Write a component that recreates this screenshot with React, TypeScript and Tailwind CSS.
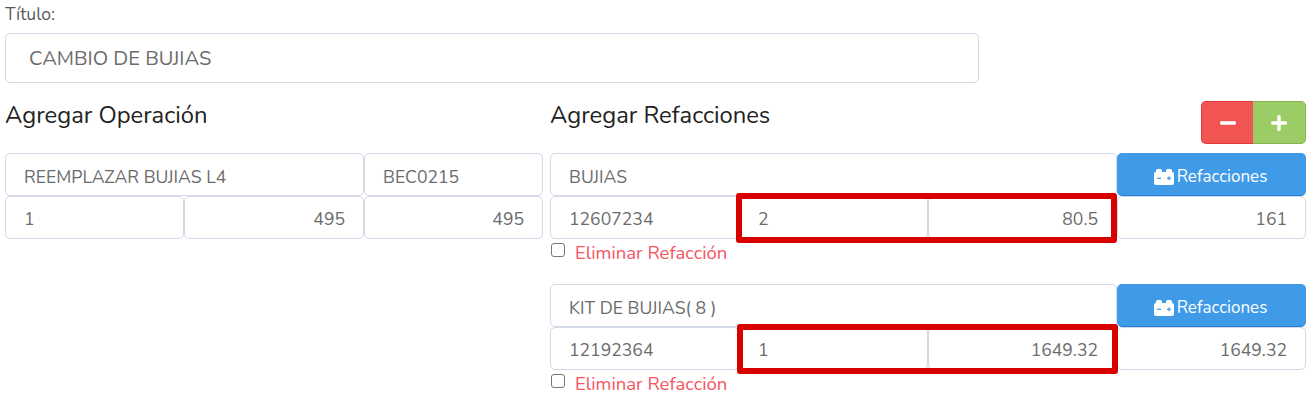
import { FaMinus, FaPlus } from "react-icons/fa";

const field =
  "block h-[43px] min-w-0 rounded-[5px] border border-[#d3d9e6] bg-white px-[18px] text-[17.6px] text-[#6b6b6b] outline-none";

function Field({ value, w, right, top }: { value: string; w: string; right?: boolean; top?: boolean }) {
  return <input readOnly value={value} className={`${field} ${w} ${top ? "pt-[4px]" : "pt-[2px]"} ${right ? "text-right" : ""}`} />;
}

function BatteryIcon() {
  return (
    <svg viewBox="0 0 20 16" className="h-[16px] w-[20px]" fill="currentColor">
      <path d="M2 1.500a1.500 1.500 0 0 1 1.500-1.500h3a1.500 1.500 0 0 1 1.500 1.500V3h4V1.500a1.500 1.500 0 0 1 1.500-1.500h3a1.500 1.500 0 0 1 1.500 1.500V3a2 2 0 0 1 2 2v9a2 2 0 0 1-2 2H2a2 2 0 0 1-2-2V5a2 2 0 0 1 2-2V1.500z" />
      <rect x="3" y="8.700" width="4" height="1.200" fill="#3f9ae8" />
      <rect x="13" y="8.700" width="4" height="1.200" fill="#3f9ae8" />
      <rect x="14.400" y="7.300" width="1.200" height="4" fill="#3f9ae8" />
    </svg>
  );
}

function Refaccion({ name, code, qty, price, total, boxClass }: { name: string; code: string; qty: string; price: string; total: string; boxClass: string }) {
  return (
    <div className="mb-[14px]">
      <div className="flex">
        <Field value={name} w="w-[567px]" top />
        <button className="flex h-[43px] w-[189px] items-center justify-center gap-[3px] rounded-[5px] border border-[#3f9ae8] border-b-[#1f7fd6] bg-[#3f9ae8] pr-[2px] pt-[5px] text-[17px] text-white">
          <BatteryIcon />
          Refacciones
        </button>
      </div>
      <div className="relative flex">
        <Field value={code} w="w-[189px]" />
        <Field value={qty} w="w-[189px]" />
        <Field value={price} w="w-[189px]" right />
        <Field value={total} w="w-[189px]" right />
        {/* red highlight drawn over the qty + price cells */}
        <div className={`pointer-events-none absolute h-[50px] w-[381px] rounded-[3px] border-[6px] border-[#d90000] ${boxClass}`} />
      </div>
      <div className="flex h-[31px] items-start">
        <input type="checkbox" readOnly className="ml-px mt-[4px] h-[14px] w-[14px] appearance-none rounded-[3px] border border-[#767676] bg-white" />
        <span className="ml-[10px] text-[18.5px] leading-[28px] text-[#f4555f]">Eliminar Refacción</span>
      </div>
    </div>
  );
}

export default function App() {
  return (
    <div className="h-[405px] w-[1313px] overflow-hidden bg-white pl-[5px] font-['Nunito','Lato','Noto_Sans',sans-serif]">
      <label className="block pt-[2px] text-[17.6px] leading-[24px] text-[#5a5a5a]">Título:</label>
      <input
        readOnly
        value="CAMBIO DE BUJIAS"
        className="mt-[7px] block h-[50px] w-[974px] rounded-[5px] border border-[#d3d9e6] bg-white px-[23px] text-[20.1px] text-[#6b6b6b] outline-none"
      />
      <div className="mt-[4px] flex gap-[7px]">
        <div className="w-[538px]">
          <h2 className="h-[66px] pt-[13px] text-[23.8px] leading-[30px] text-[#222]">Agregar Operación</h2>
          <div className="flex">
            <Field value="REEMPLAZAR BUJIAS L4" w="w-[359px]" top />
            <Field value="BEC0215" w="w-[179px]" top />
          </div>
          <div className="flex">
            <Field value="1" w="w-[179px]" />
            <Field value="495" w="w-[180px]" right />
            <Field value="495" w="w-[179px]" right />
          </div>
        </div>
        <div className="w-[756px]">
          <div className="flex h-[66px] items-start justify-between">
            <h2 className="pt-[13px] text-[23.8px] leading-[30px] text-[#222]">Agregar Refacciones</h2>
            <div className="mt-[14px] flex h-[43px] text-[18px] text-white">
              <button className="flex w-[52px] items-center justify-center rounded-l-[5px] border border-r-0 border-[#e5393a] bg-[#f15553]">
                <FaMinus />
              </button>
              <button className="flex w-[53px] items-center justify-center rounded-r-[5px] border border-l-0 border-[#8ab44f] bg-[#9ccc65]">
                <FaPlus />
              </button>
            </div>
          </div>
          <Refaccion name="BUJIAS" code="12607234" qty="2" price="80.5" total="161" boxClass="left-[186px] top-[-3px]" />
          <Refaccion name="KIT DE BUJIAS( 8 )" code="12192364" qty="1" price="1649.32" total="1649.32" boxClass="left-[187px] top-[-3px]" />
        </div>
      </div>
    </div>
  );
}
